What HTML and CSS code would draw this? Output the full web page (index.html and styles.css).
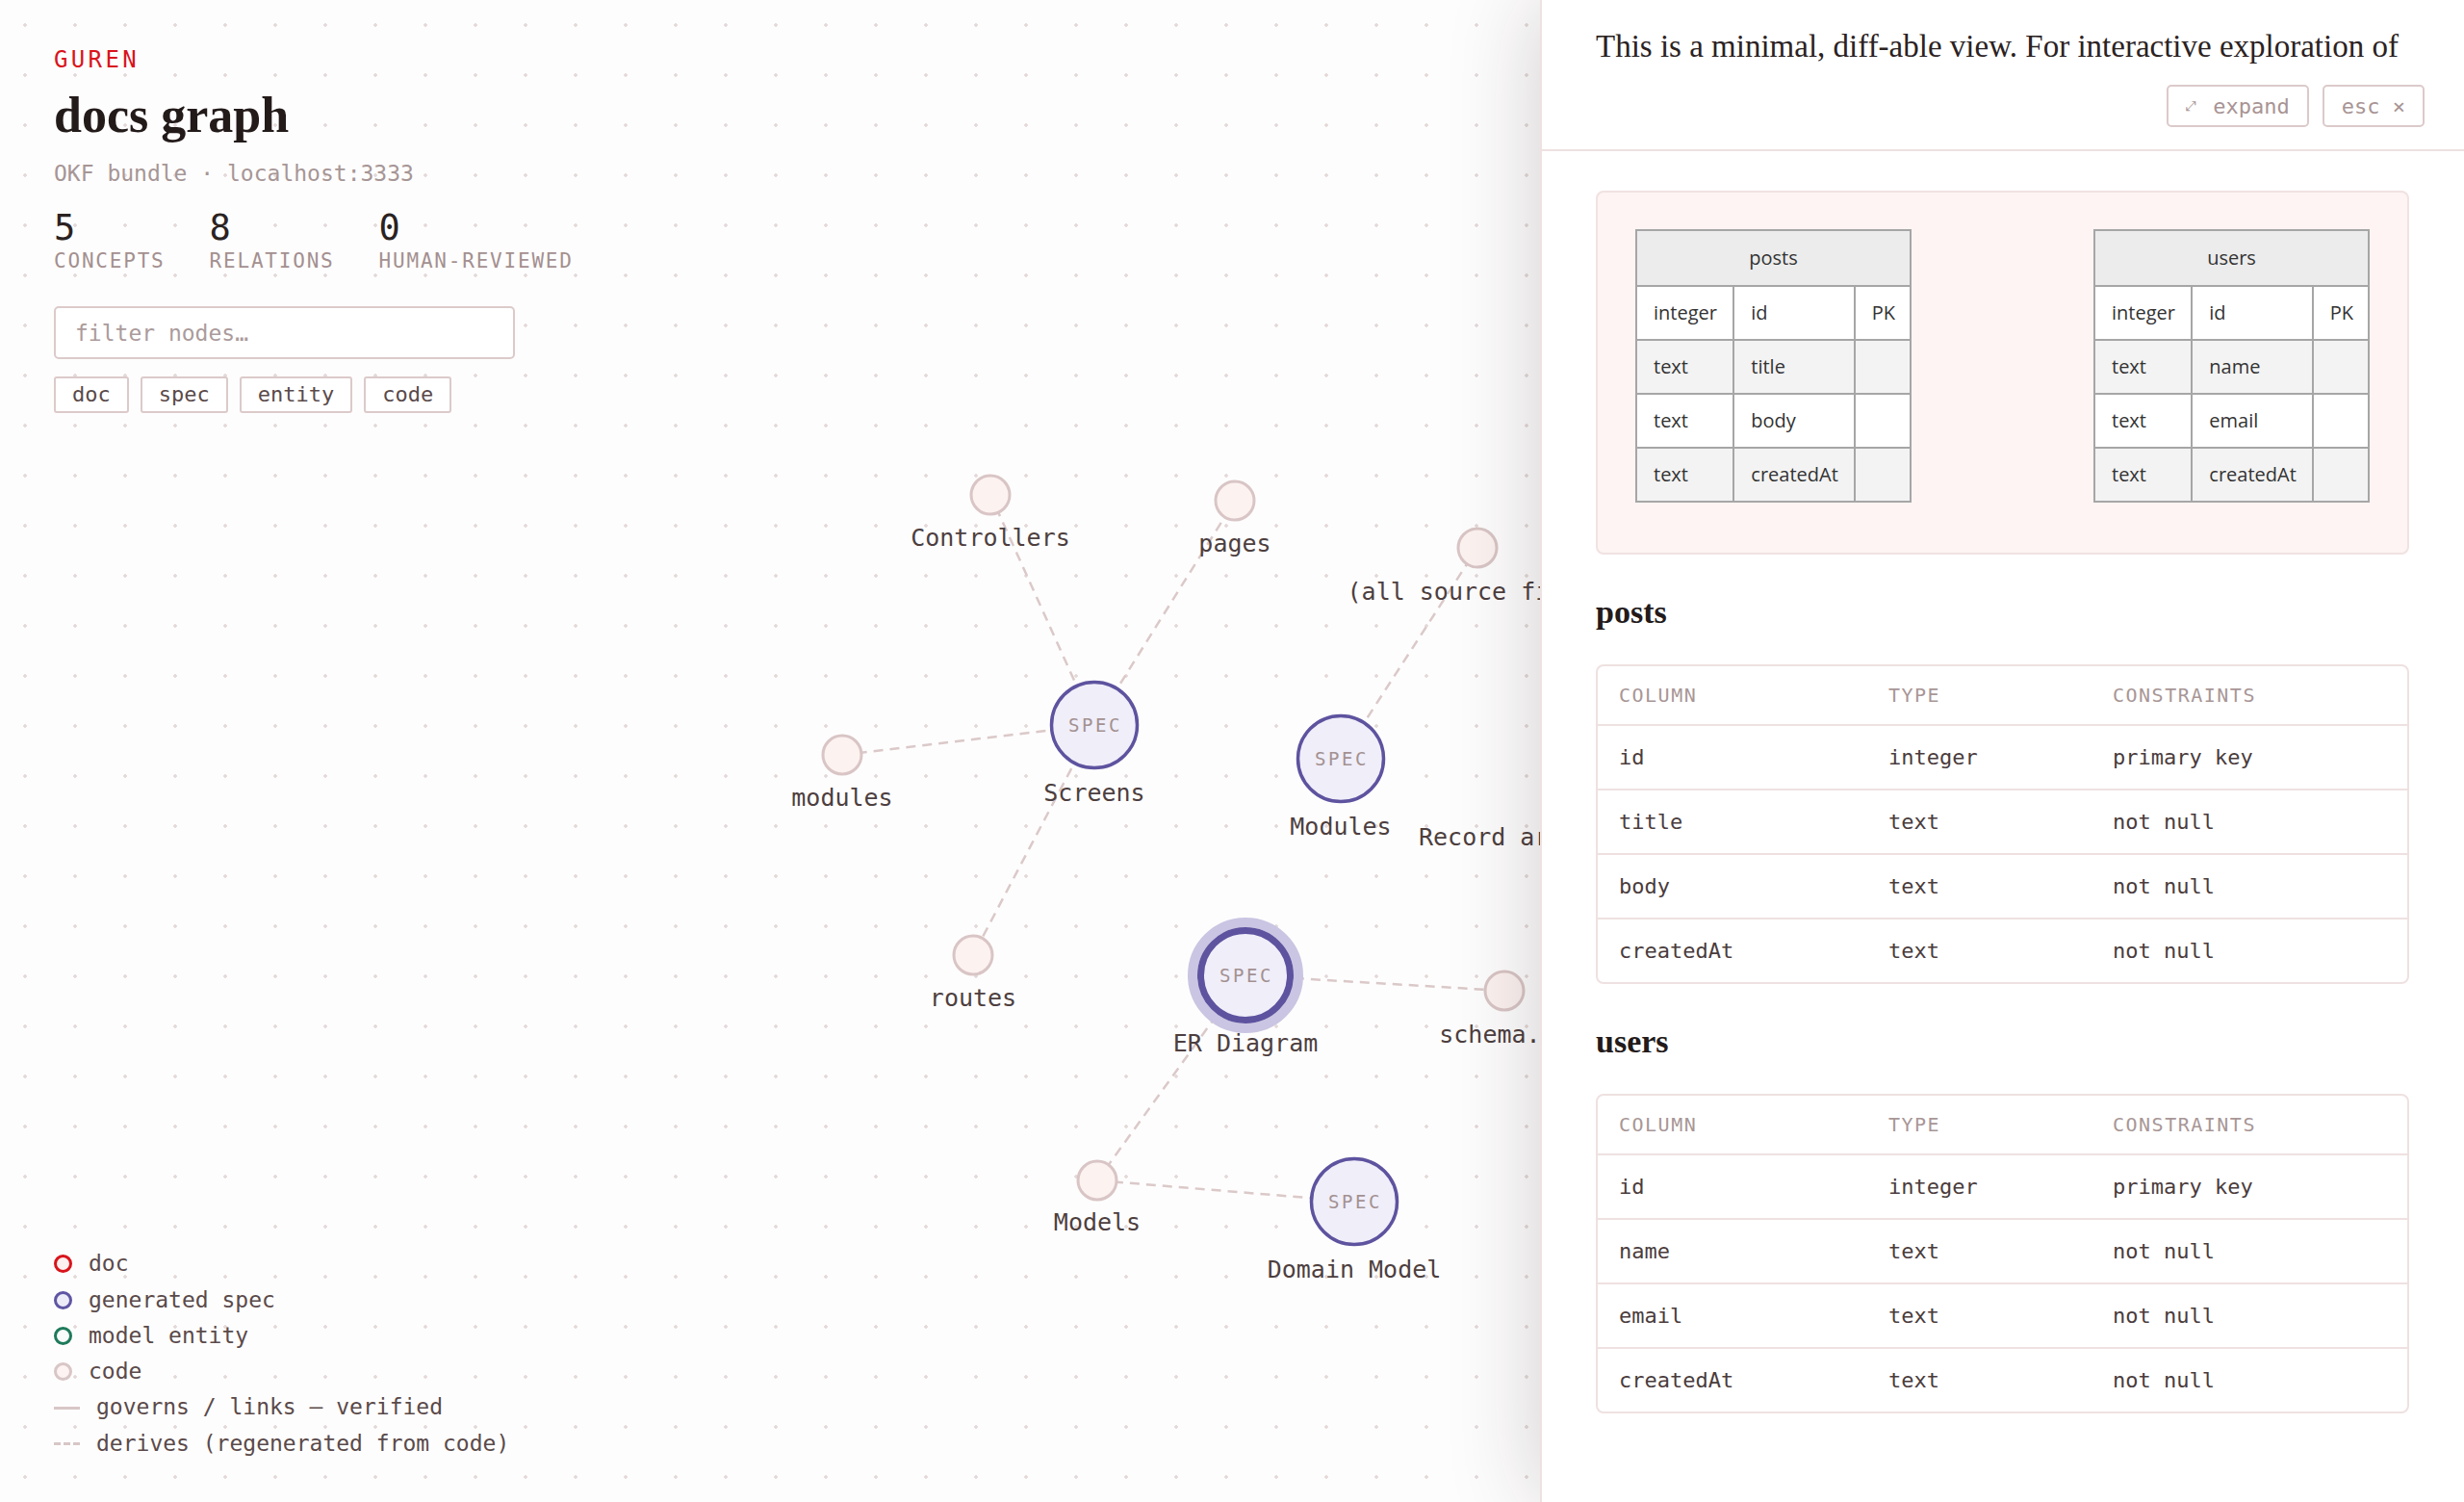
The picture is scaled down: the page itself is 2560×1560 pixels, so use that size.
FILE: index.html
```html
<!DOCTYPE html>
<html lang="en">
<head>
<meta charset="utf-8">
<title>docs graph</title>
<link rel="stylesheet" href="styles.css">
</head>
<body>
<div class="app">
  <svg class="graph" width="2560" height="1560" viewBox="0 0 2560 1560" xmlns="http://www.w3.org/2000/svg">
    <g class="edges">
      <line x1="1137" y1="753" x2="1029" y2="514"/>
      <line x1="1137" y1="753" x2="1283" y2="520"/>
      <line x1="1137" y1="753" x2="875" y2="784"/>
      <line x1="1137" y1="753" x2="1011" y2="992"/>
      <line x1="1393" y1="788" x2="1535" y2="569"/>
      <line x1="1294" y1="1013" x2="1563" y2="1029"/>
      <line x1="1294" y1="1013" x2="1140" y2="1226"/>
      <line x1="1140" y1="1226" x2="1407" y2="1248"/>
    </g>
    <g class="nodes">
      <circle class="code-node" cx="1029" cy="514" r="20"/>
      <text class="node-label" x="1029" y="567">Controllers</text>

      <circle class="code-node" cx="1283" cy="520" r="20"/>
      <text class="node-label" x="1283" y="573">pages</text>

      <circle class="code-node" cx="1535" cy="569" r="20"/>
      <text class="node-label" x="1535" y="623">(all source files)</text>

      <circle class="code-node" cx="875" cy="784" r="20"/>
      <text class="node-label" x="875" y="837">modules</text>

      <circle class="code-node" cx="1011" cy="992" r="20"/>
      <text class="node-label" x="1011" y="1045">routes</text>

      <circle class="code-node" cx="1563" cy="1029" r="20"/>
      <text class="node-label" x="1563" y="1083">schema.ts</text>

      <circle class="code-node" cx="1140" cy="1226" r="20"/>
      <text class="node-label" x="1140" y="1278">Models</text>

      <circle class="spec-node" cx="1137" cy="753" r="44.5"/>
      <text class="spec-tag" x="1138" y="760">SPEC</text>
      <text class="node-label" x="1137" y="832">Screens</text>

      <circle class="spec-node" cx="1393" cy="788" r="44.5"/>
      <text class="spec-tag" x="1394" y="795">SPEC</text>
      <text class="node-label" x="1393" y="867">Modules</text>

      <circle class="spec-node" cx="1720" cy="799" r="44.5"/>
      <text class="node-label start" x="1474" y="878">Record area</text>

      <circle class="halo" cx="1294" cy="1013" r="55"/>
      <circle class="spec-node selected" cx="1294" cy="1013" r="46.5"/>
      <text class="spec-tag" x="1295" y="1020">SPEC</text>
      <text class="node-label" x="1294" y="1092">ER Diagram</text>

      <circle class="spec-node" cx="1407" cy="1248" r="44.5"/>
      <text class="spec-tag" x="1408" y="1255">SPEC</text>
      <text class="node-label" x="1407" y="1327">Domain Model</text>
    </g>
  </svg>

  <main class="canvas-ui">
    <header class="intro">
      <div class="brand">GUREN</div>
      <h1 class="title">docs graph</h1>
      <div class="subtitle">OKF bundle · localhost:3333</div>
      <div class="stats">
        <div class="stat"><div class="stat-num">5</div><div class="stat-label">CONCEPTS</div></div>
        <div class="stat"><div class="stat-num">8</div><div class="stat-label">RELATIONS</div></div>
        <div class="stat"><div class="stat-num">0</div><div class="stat-label">HUMAN-REVIEWED</div></div>
      </div>
      <input class="filter" type="text" placeholder="filter nodes…">
      <div class="tags">
        <button class="tag">doc</button>
        <button class="tag">spec</button>
        <button class="tag">entity</button>
        <button class="tag">code</button>
      </div>
    </header>

    <ul class="legend">
      <li><span class="swatch swatch-doc"></span>doc</li>
      <li><span class="swatch swatch-spec"></span>generated spec</li>
      <li><span class="swatch swatch-entity"></span>model entity</li>
      <li><span class="swatch swatch-code"></span>code</li>
      <li><span class="line-swatch"></span>governs / links — verified</li>
      <li><span class="line-swatch dashed"></span>derives (regenerated from code)</li>
    </ul>
  </main>

  <aside class="panel">
    <div class="panel-head">
      <p class="panel-desc">This is a minimal, diff-able view. For interactive exploration of</p>
      <div class="panel-actions">
        <button class="pbtn"><span class="pbtn-icon">⤢</span>expand</button>
        <button class="pbtn">esc ×</button>
      </div>
    </div>
    <div class="panel-body">
      <div class="er-box">
        <table class="er">
          <colgroup><col class="c1"><col class="c2"><col class="c3"></colgroup>
          <tr><th colspan="3">posts</th></tr>
          <tr><td>integer</td><td>id</td><td>PK</td></tr>
          <tr class="alt"><td>text</td><td>title</td><td></td></tr>
          <tr><td>text</td><td>body</td><td></td></tr>
          <tr class="alt"><td>text</td><td>createdAt</td><td></td></tr>
        </table>
        <table class="er">
          <colgroup><col class="c1"><col class="c2"><col class="c3"></colgroup>
          <tr><th colspan="3">users</th></tr>
          <tr><td>integer</td><td>id</td><td>PK</td></tr>
          <tr class="alt"><td>text</td><td>name</td><td></td></tr>
          <tr><td>text</td><td>email</td><td></td></tr>
          <tr class="alt"><td>text</td><td>createdAt</td><td></td></tr>
        </table>
      </div>

      <h3 class="section-title">posts</h3>
      <table class="cols">
        <colgroup><col class="k1"><col class="k2"><col class="k3"></colgroup>
        <thead><tr><th>COLUMN</th><th>TYPE</th><th>CONSTRAINTS</th></tr></thead>
        <tbody>
          <tr><td>id</td><td>integer</td><td>primary key</td></tr>
          <tr><td>title</td><td>text</td><td>not null</td></tr>
          <tr><td>body</td><td>text</td><td>not null</td></tr>
          <tr><td>createdAt</td><td>text</td><td>not null</td></tr>
        </tbody>
      </table>

      <h3 class="section-title">users</h3>
      <table class="cols">
        <colgroup><col class="k1"><col class="k2"><col class="k3"></colgroup>
        <thead><tr><th>COLUMN</th><th>TYPE</th><th>CONSTRAINTS</th></tr></thead>
        <tbody>
          <tr><td>id</td><td>integer</td><td>primary key</td></tr>
          <tr><td>name</td><td>text</td><td>not null</td></tr>
          <tr><td>email</td><td>text</td><td>not null</td></tr>
          <tr><td>createdAt</td><td>text</td><td>not null</td></tr>
        </tbody>
      </table>
    </div>
  </aside>
</div>
</body>
</html>
```

FILE: styles.css
```css
* { box-sizing: border-box; }

html, body {
  margin: 0;
  padding: 0;
}

body {
  font-family: "DejaVu Sans Mono", monospace;
  color: #2b2222;
  background: #fefdfd;
}

.app {
  position: relative;
  display: flex;
  width: 2560px;
  height: 1560px;
  overflow: hidden;
  background-color: #fefdfd;
  background-image: radial-gradient(circle, #e4d9d9 1.5px, rgba(228,217,217,0) 2px);
  background-size: 52px 52px;
  background-position: 0 0;
}

/* ---------- graph canvas ---------- */
.graph {
  position: absolute;
  left: 0;
  top: 0;
}

.edges line {
  stroke: #dbc9c9;
  stroke-width: 2.5;
  stroke-dasharray: 10 7;
}

.code-node {
  fill: #fcf2f0;
  stroke: #d9c5c5;
  stroke-width: 3;
}

.spec-node {
  fill: #f0eef9;
  stroke: #5d539f;
  stroke-width: 3.5;
}

.spec-node.selected {
  stroke-width: 7;
}

.halo {
  fill: none;
  stroke: #cac5e2;
  stroke-width: 10;
}

.node-label {
  font-family: "DejaVu Sans Mono", monospace;
  font-size: 25px;
  fill: #4d3f3f;
  text-anchor: middle;
}

.node-label.start {
  text-anchor: start;
}

.spec-tag {
  font-family: "DejaVu Sans Mono", monospace;
  font-size: 19px;
  letter-spacing: 2.5px;
  fill: #a39191;
  text-anchor: middle;
}

/* ---------- left overlay ui ---------- */
.canvas-ui {
  position: relative;
  z-index: 1;
  flex: 1;
  display: flex;
  flex-direction: column;
  padding: 48px 56px 42px;
}

.brand {
  font-size: 24px;
  line-height: 28px;
  letter-spacing: 0.14em;
  color: #d9141c;
}

.title {
  margin: 14px 0 0;
  font-family: "Liberation Serif", serif;
  font-weight: 700;
  font-size: 52px;
  line-height: 60px;
  color: #231a1a;
}

.subtitle {
  margin-top: 16px;
  font-size: 23px;
  line-height: 28px;
  color: #a69696;
}

.stats {
  display: flex;
  gap: 46px;
  margin-top: 23px;
}

.stat-num {
  font-size: 37px;
  line-height: 40px;
  color: #2b2222;
}

.stat-label {
  margin-top: 2px;
  font-size: 21px;
  line-height: 24px;
  letter-spacing: 1.8px;
  color: #a39090;
}

.filter {
  display: block;
  width: 479px;
  height: 55px;
  margin-top: 35px;
  padding: 0 20px;
  border: 2px solid #dccaca;
  border-radius: 5px;
  background: #ffffff;
  font-family: "DejaVu Sans Mono", monospace;
  font-size: 23px;
  color: #4d3f3f;
  outline: none;
}

.filter::placeholder {
  color: #ab9b9b;
}

.tags {
  display: flex;
  gap: 12px;
  margin-top: 18px;
}

.tag {
  height: 38px;
  padding: 0 17px;
  border: 2px solid #dccaca;
  border-radius: 3px;
  background: #ffffff;
  font-family: "DejaVu Sans Mono", monospace;
  font-size: 22px;
  line-height: 34px;
  color: #5a4a4a;
}

.legend {
  list-style: none;
  margin: auto 0 0;
  padding: 0;
}

.legend li {
  display: flex;
  align-items: center;
  gap: 17px;
  font-size: 23px;
  line-height: 37.3px;
  color: #5a4a4a;
}

.swatch {
  width: 19px;
  height: 19px;
  border-radius: 50%;
  border: 3px solid #d8c6c6;
  flex: none;
}

.swatch-doc { border-color: #d9141c; background: #fdf0f0; }
.swatch-spec { border-color: #5e56a3; background: #ecebf8; }
.swatch-entity { border-color: #1e7a5b; background: #f7fbf9; }
.swatch-code { border-color: #d8c6c6; background: #fcf3f2; }

.line-swatch {
  width: 27px;
  height: 3px;
  flex: none;
  background: #d8c6c6;
}

.line-swatch.dashed {
  background: repeating-linear-gradient(to right, #d8c6c6 0 7px, transparent 7px 10px);
}

/* ---------- side panel ---------- */
.panel {
  position: relative;
  z-index: 2;
  flex: none;
  width: 960px;
  height: 1560px;
  border-left: 2px solid #efe1e1;
  background: #ffffff;
  box-shadow: 0 0 90px rgba(30, 20, 20, 0.2);
  display: flex;
  flex-direction: column;
}

.panel-head {
  padding: 28px 41px 23px 56px;
  border-bottom: 2px solid #efe1e1;
}

.panel-desc {
  margin: 0;
  font-family: "Liberation Serif", serif;
  font-size: 33px;
  line-height: 40px;
  color: #2b2222;
  white-space: nowrap;
  overflow: hidden;
}

.panel-actions {
  display: flex;
  justify-content: flex-end;
  gap: 14px;
  margin-top: 20px;
}

.pbtn {
  display: flex;
  align-items: center;
  height: 44px;
  padding: 0 18px;
  border: 2px solid #dccaca;
  border-radius: 5px;
  background: #ffffff;
  font-family: "DejaVu Sans Mono", monospace;
  font-size: 22px;
  color: #a89494;
}

.pbtn-icon {
  display: inline-block;
  width: 28px;
  font-size: 14px;
  text-align: left;
}

.panel-body {
  padding: 41px 57px 0 56px;
}

.er-box {
  display: flex;
  justify-content: space-between;
  padding: 38px 39px 52px;
  border: 2px solid #f1e2e2;
  border-radius: 8px;
  background: #fdf4f3;
}

.er {
  width: 287px;
  border-collapse: collapse;
  border: 2px solid #a6a6a6;
  font-family: "Open Sans", sans-serif;
  font-size: 20px;
  color: #333333;
  background: #ffffff;
}

.er col.c1 { width: 102px; }
.er col.c2 { width: 126px; }
.er col.c3 { width: 59px; }

.er th,
.er td {
  border: 2px solid #a6a6a6;
  padding: 0 0 0 17px;
  text-align: left;
  white-space: nowrap;
}

.er th {
  padding: 0;
  text-align: center;
  font-weight: 400;
  line-height: 56px;
  background: #ececec;
}

.er td {
  line-height: 54px;
}

.er tr.alt td {
  background: #f3f3f3;
}

.section-title {
  margin: 40px 0 34px;
  font-family: "Liberation Serif", serif;
  font-weight: 700;
  font-size: 34px;
  line-height: 40px;
  color: #231a1a;
}

.cols {
  width: 100%;
  table-layout: fixed;
  border-spacing: 0;
  border: 2px solid #efe1e1;
  border-radius: 8px;
}

.cols col.k1 { width: 280px; }
.cols col.k2 { width: 233px; }

.cols th {
  padding: 0 22px;
  text-align: left;
  font-weight: 400;
  font-size: 20px;
  letter-spacing: 1.5px;
  line-height: 60px;
  color: #a89696;
  border-bottom: 2px solid #efe1e1;
}

.cols td {
  padding: 0 22px;
  font-size: 22px;
  line-height: 65px;
  color: #4a3c3c;
  border-bottom: 2px solid #efe1e1;
}

.cols tbody tr:last-child td {
  border-bottom: none;
}
```
